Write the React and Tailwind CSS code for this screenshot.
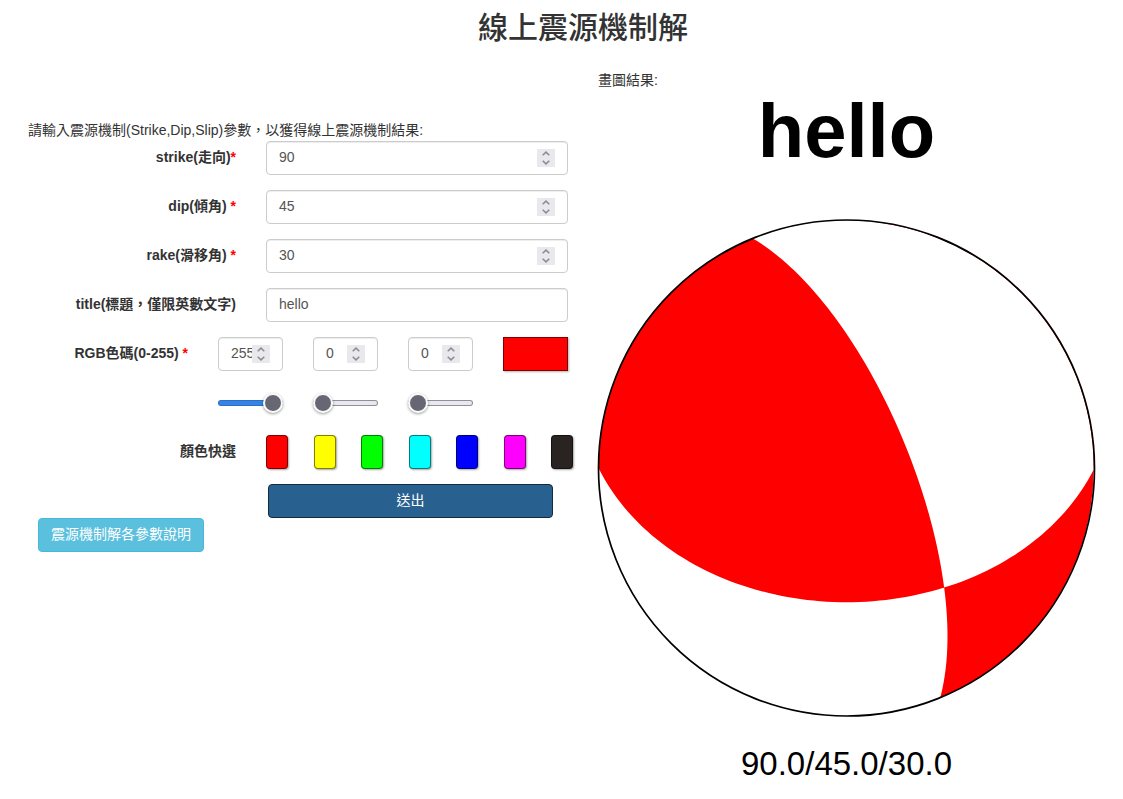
import { useState } from "react";

const R = 248;
const rad = (deg) => (Number(deg) * Math.PI) / 180;

// Lower-hemisphere equal-area projection of a (north, east, down) vector.
const project = ([n, e, d]) => {
  const f = R / Math.sqrt(1 + d);
  return `${(e * f).toFixed(2)} ${(-n * f).toFixed(2)}`;
};

// Area between a nodal plane and the rim, on the side the plane dips to.
function lens(strike, dip) {
  const s = [Math.cos(strike), Math.sin(strike), 0];
  const d = [
    -Math.sin(strike) * Math.cos(dip),
    Math.cos(strike) * Math.cos(dip),
    Math.sin(dip),
  ];
  const points = [];
  for (let i = 0; i <= 90; i++) {
    const t = (i * Math.PI) / 90;
    points.push(project(s.map((v, k) => v * Math.cos(t) + d[k] * Math.sin(t))));
  }
  return `M${points.join("L")}A${R} ${R} 0 0 0 ${points[0]}Z`;
}

function beachBallPath(strikeDeg, dipDeg, rakeDeg) {
  const [st, di, ra] = [rad(strikeDeg), rad(dipDeg), rad(rakeDeg)];
  let slip = [
    Math.cos(ra) * Math.cos(st) + Math.sin(ra) * Math.sin(st) * Math.cos(di),
    Math.cos(ra) * Math.sin(st) - Math.sin(ra) * Math.cos(st) * Math.cos(di),
    -Math.sin(ra) * Math.sin(di),
  ];
  const upward = slip[2] < 0;
  if (!upward) slip = slip.map((v) => -v);
  const auxStrike = Math.atan2(slip[1], slip[0]) - Math.PI / 2;
  const auxDip = Math.acos(Math.min(1, -slip[2]));
  const rim = `M${-R} 0A${R} ${R} 0 1 1 ${R} 0A${R} ${R} 0 1 1 ${-R} 0Z`;
  return (upward ? rim : "") + lens(st, di) + lens(auxStrike, auxDip);
}

function BeachBall({ strike, dip, rake, color }) {
  return (
    <svg viewBox="-248.5 -248 497 497" className="block w-full overflow-visible" role="img" aria-label="beach ball">
      <path d={beachBallPath(strike, dip, rake)} fillRule="evenodd" style={{ fill: color }} />
      <circle r={R} fill="none" stroke="#000" strokeWidth="1.7" />
    </svg>
  );
}

const fieldBox =
  "flex h-[34px] w-full min-w-0 items-center rounded-[4px] border border-[#ccc] bg-white px-3 text-[#555] shadow-[inset_0_1px_1px_rgba(0,0,0,0.075)] focus-within:border-[#66afe9]";

function NumberField({ id, label, value, onChange, min, max }) {
  const step = (by) => {
    const next = Number(value) + by;
    if (next >= min && next <= max) onChange(String(next));
  };
  return (
    <div className={fieldBox}>
      <input
        id={id}
        aria-label={label}
        type="number"
        min={min}
        max={max}
        value={value}
        onChange={(e) => onChange(e.target.value)}
        className="min-w-0 flex-1 bg-transparent pb-0.5 outline-none [appearance:textfield] [&::-webkit-inner-spin-button]:appearance-none"
      />
      <span className="flex w-[18px] shrink-0 flex-col bg-[#e9e9ed] text-[#8b8b93]">
        <button type="button" tabIndex={-1} aria-label="+1" onClick={() => step(1)} className="flex h-[9px] items-center justify-center">
          <svg width="8" height="5" viewBox="0 0 8 5" fill="none" stroke="currentColor" strokeWidth="1.5">
            <path d="M0.7 4.2 4 1.1 7.3 4.2" />
          </svg>
        </button>
        <button type="button" tabIndex={-1} aria-label="-1" onClick={() => step(-1)} className="flex h-[9px] items-center justify-center">
          <svg width="8" height="5" viewBox="0 0 8 5" fill="none" stroke="currentColor" strokeWidth="1.5">
            <path d="M0.7 0.8 4 3.9 7.3 0.8" />
          </svg>
        </button>
      </span>
    </div>
  );
}

function Slider({ label, value, onChange }) {
  const pct = (Number(value) / 255) * 100;
  const ramp = (a, b) => `linear-gradient(to right, ${a} ${pct}%, ${b} ${pct}%)`;
  const track = `${ramp("#3584e4", "#e9e9ed")} padding-box, ${ramp("#2a6fc9", "#8f8f9d")} border-box`;
  return (
    <input
      type="range"
      aria-label={label}
      min="0"
      max="255"
      value={value}
      onChange={(e) => onChange(e.target.value)}
      style={{ "--track": track }}
      className="h-5 w-full min-w-0 appearance-none bg-transparent [&::-webkit-slider-runnable-track]:h-[6px] [&::-webkit-slider-runnable-track]:rounded-[3px] [&::-webkit-slider-runnable-track]:border [&::-webkit-slider-runnable-track]:border-transparent [&::-webkit-slider-runnable-track]:[background:var(--track)] [&::-webkit-slider-thumb]:-mt-[7px] [&::-webkit-slider-thumb]:size-[18px] [&::-webkit-slider-thumb]:appearance-none [&::-webkit-slider-thumb]:rounded-full [&::-webkit-slider-thumb]:border [&::-webkit-slider-thumb]:border-white [&::-webkit-slider-thumb]:bg-[#676774] [&::-webkit-slider-thumb]:shadow-[0_0_0_1px_#fff,0_1px_3px_1px_rgba(0,0,0,0.4)]"
    />
  );
}

const row = "grid grid-cols-[208fr_302fr] gap-x-[30px]";
const rgbRow = "grid grid-cols-[160fr_65fr_65fr_65fr_65fr] items-center gap-x-[30px]";
const labelText = "pt-[6px] text-right font-bold";
const star = <span className="text-[#f00]">*</span>;

const swatches = [
  [255, 0, 0],
  [255, 255, 0],
  [0, 255, 0],
  [0, 255, 255],
  [0, 0, 255],
  [255, 0, 255],
  [41, 36, 33],
];

const channels = ["R", "G", "B"];

const fixed = (v) => Number(v).toFixed(1);

export default function App() {
  const [strike, setStrike] = useState("90");
  const [dip, setDip] = useState("45");
  const [rake, setRake] = useState("30");
  const [title, setTitle] = useState("hello");
  const [rgb, setRgb] = useState(["255", "0", "0"]);
  const color = `rgb(${rgb.map(Number).join(",")})`;
  const setChannel = (i) => (v) => setRgb(rgb.map((c, k) => (k === i ? v : c)));

  return (
    <div className="bg-white pt-[11px] font-['Liberation_Sans','Noto_Sans_CJK_TC',sans-serif] text-[14px] leading-5 text-[#333]">
      <h1 className="pl-[43px] text-center text-[30px] leading-[33px] font-medium">線上震源機制解</h1>
      <main className="mt-[26px] grid grid-cols-[540fr_497fr] gap-x-[30px] px-7">
        <section className="min-w-0 pt-[50px]">
          <p className="h-[21px]">請輸入震源機制(Strike,Dip,Slip)參數，以獲得線上震源機制結果:</p>
          <form className="flex flex-col gap-[15px]" onSubmit={(e) => e.preventDefault()}>
            <div className={row}>
              <label htmlFor="strike" className={labelText}>strike(走向){star}</label>
              <NumberField id="strike" value={strike} onChange={setStrike} min={0} max={360} />
            </div>
            <div className={row}>
              <label htmlFor="dip" className={labelText}>dip(傾角) {star}</label>
              <NumberField id="dip" value={dip} onChange={setDip} min={0} max={90} />
            </div>
            <div className={row}>
              <label htmlFor="rake" className={labelText}>rake(滑移角) {star}</label>
              <NumberField id="rake" value={rake} onChange={setRake} min={-180} max={180} />
            </div>
            <div className={row}>
              <label htmlFor="title" className={labelText}>title(標題，僅限英數文字)</label>
              <input id="title" type="text" value={title} onChange={(e) => setTitle(e.target.value)} className={`${fieldBox} pb-0.5 outline-none`} />
            </div>
            <div className={rgbRow}>
              <label htmlFor="rgb-R" className="self-start pt-[6px] text-right font-bold whitespace-nowrap">RGB色碼(0-255) {star}</label>
              {channels.map((c, i) => (
                <NumberField key={c} id={`rgb-${c}`} label={c} value={rgb[i]} onChange={setChannel(i)} min={0} max={255} />
              ))}
              <div className="h-[34px] border border-black/50 shadow-[1px_1px_2px_rgba(0,0,0,0.3)]" style={{ backgroundColor: color }} />
            </div>
            <div className={`${rgbRow} h-[34px]`}>
              <span />
              {channels.map((c, i) => (
                <Slider key={c} label={c} value={rgb[i]} onChange={setChannel(i)} />
              ))}
            </div>
            <div className={row}>
              <span className={labelText}>顏色快選</span>
              <div className="-mr-[5px] flex justify-between">
                {swatches.map((s) => (
                  <button
                    key={s.join()}
                    type="button"
                    aria-label={`rgb ${s.join(" ")}`}
                    onClick={() => setRgb(s.map(String))}
                    className="h-[34px] w-[22px] rounded-[4px] border border-black/50 shadow-[1px_1px_2px_rgba(0,0,0,0.35)]"
                    style={{ backgroundColor: `rgb(${s.join(",")})` }}
                  />
                ))}
              </div>
            </div>
            <div className="grid grid-cols-[240fr_285fr_15fr]">
              <button type="submit" className="col-start-2 h-[34px] rounded-[4px] border border-[#122b40] bg-[#286090] pb-0.5 text-white">
                送出
              </button>
            </div>
          </form>
          <button type="button" className="ml-[10px] h-[34px] rounded-[4px] border border-[#46b8da] bg-[#5bc0de] px-3 pb-0.5 text-white">
            震源機制解各參數說明
          </button>
        </section>
        <section className="min-w-0 text-center">
          <p className="text-left leading-5">畫圖結果:</p>
          <p className="pt-[5px] text-[76px] leading-[72px] font-bold text-black">{title}</p>
          <div className="pt-[53px]">
            <BeachBall strike={strike} dip={dip} rake={rake} color={color} />
          </div>
          <p className="pt-[27px] text-[33px] leading-10 text-black">
            {fixed(strike)}/{fixed(dip)}/{fixed(rake)}
          </p>
        </section>
      </main>
    </div>
  );
}
